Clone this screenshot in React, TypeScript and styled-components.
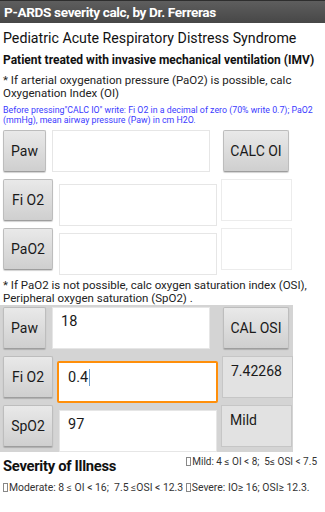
import styled, { createGlobalStyle } from "styled-components";

const Global = createGlobalStyle`
  html, body {
    margin: 0;
    padding: 0;
    background: #ffffff;
    font-family: Roboto, "Noto Sans", "Liberation Sans", sans-serif;
    color: #1c1c1c;
  }
  * { box-sizing: border-box; }
`;

const Screen = styled.div`
  width: 325px;
  height: 512px;
  overflow: hidden;
  background: #fff;
`;

const TitleBar = styled.div`
  height: 23px;
  background: linear-gradient(#5e5e5e, #474747);
  border-top: 1px solid #2e2e2e;
  color: #fff;
  font-weight: 700;
  font-size: 13.6px;
  letter-spacing: -0.35px;
  line-height: 22px;
  padding-left: 4px;
`;

const Heading = styled.div`
  font-size: 14.2px;
  line-height: 18px;
  padding: 6px 0 0 3px;
  color: #111;
`;

const SubHeading = styled.div`
  font-size: 12px;
  font-weight: 700;
  line-height: 16px;
  padding: 5px 0 0 3px;
  color: #111;
  white-space: nowrap;
`;

const Note = styled.div`
  font-size: 11.5px;
  line-height: 12.5px;
  padding: 6px 0 0 3px;
  color: #222;
`;

const Hint = styled.div`
  font-size: 8.8px;
  line-height: 10px;
  padding: 6px 0 0 3px;
  color: #3b3bff;
  white-space: nowrap;
`;

const Panel = styled.div<{ $gray?: boolean; $top: number }>`
  width: 293px;
  margin-top: ${(p) => p.$top}px;
  padding-top: 2px;
  background: ${(p) => (p.$gray ? "#d4d4d4" : "transparent")};
`;

const Row = styled.div<{ $h: number }>`
  display: flex;
  align-items: flex-start;
  height: ${(p) => p.$h}px;
`;

const Button = styled.div<{ $w: number; $ml: number }>`
  width: ${(p) => p.$w}px;
  height: 42px;
  margin-left: ${(p) => p.$ml}px;
  display: flex;
  align-items: center;
  justify-content: center;
  font-size: 14px;
  color: #1a1a1a;
  background: linear-gradient(#e9e9e9, #cfcfcf);
  border: 1px solid #bdbdbd;
  border-bottom-color: #9e9e9e;
  border-radius: 2px;
  box-shadow: 0 1px 1px rgba(0, 0, 0, 0.18);
  flex-shrink: 0;
`;

const Field = styled.div<{ $w: number; $ml: number; $mt?: number; $focus?: boolean }>`
  width: ${(p) => p.$w}px;
  height: 42px;
  margin-left: ${(p) => p.$ml}px;
  margin-top: ${(p) => p.$mt ?? 0}px;
  background: #fff;
  border: ${(p) => (p.$focus ? "2px solid #ff8f0a" : "1px solid #e6e6e6")};
  border-radius: ${(p) => (p.$focus ? "2px" : "0")};
  padding: ${(p) => (p.$focus ? "6px 0 0 9px" : "5px 0 0 8px")};
  font-size: 14.5px;
  line-height: 18px;
  color: #1a1a1a;
  flex-shrink: 0;
`;

const Caret = styled.span`
  display: inline-block;
  width: 1px;
  height: 17px;
  margin-left: 1px;
  vertical-align: -4px;
  background: #6a9fd0;
`;

const Result = styled.div<{ $gray?: boolean }>`
  width: 71px;
  height: 42px;
  margin-left: 4px;
  background: ${(p) => (p.$gray ? "#e2e2e2" : "#fff")};
  border: 1px solid ${(p) => (p.$gray ? "#c6c6c6" : "#ececec")};
  padding: 5px 0 0 8px;
  font-size: 14px;
  line-height: 18px;
  color: #1a1a1a;
  flex-shrink: 0;
`;

const Note2 = styled(Note)`
  padding-top: 4px;
`;

const Footer = styled.div`
  display: flex;
  align-items: flex-end;
  justify-content: space-between;
  padding: 4px 0 0 3px;
`;

const Severity = styled.div`
  font-size: 14.8px;
  font-weight: 700;
  letter-spacing: -0.3px;
  line-height: 20px;
  color: #111;
`;

const Legend = styled.div`
  font-size: 10px;
  line-height: 12px;
  color: #333;
  white-space: pre;
`;

const MildLegend = styled(Legend)`
  margin-right: 8px;
  align-self: flex-start;
`;

const LegendRow = styled(Legend)`
  font-size: 10.4px;
  padding: 6px 0 0 3px;
`;

const Tofu = styled.span`
  display: inline-block;
  width: 5px;
  height: 9px;
  border: 1px solid #888;
  margin-right: 1px;
  vertical-align: -1px;
`;

export default function App() {
  return (
    <Screen>
      <Global />
      <TitleBar>P-ARDS severity calc, by Dr. Ferreras</TitleBar>
      <Heading>Pediatric Acute Respiratory Distress Syndrome</Heading>
      <SubHeading>Patient treated with invasive mechanical ventilation (IMV)</SubHeading>
      <Note>
        * If arterial oxygenation pressure (PaO2) is possible, calc
        <br />
        Oxygenation Index (OI)
      </Note>
      <Hint>
        Before pressing"CALC IO" write: Fi O2 in a decimal of zero (70% write 0.7); PaO2
        <br />
        (mmHg), mean airway pressure (Paw) in cm H2O.
      </Hint>

      <Panel $top={3}>
        <Row $h={49}>
          <Button $w={43} $ml={3}>Paw</Button>
          <Field $w={158} $ml={6} />
          <Button $w={66} $ml={13}>CALC OI</Button>
        </Row>
        <Row $h={49}>
          <Button $w={50} $ml={3}>Fi O2</Button>
          <Field $w={158} $ml={6} $mt={5} />
          <Result />
        </Row>
        <Row $h={47}>
          <Button $w={50} $ml={3}>PaO2</Button>
          <Field $w={158} $ml={6} $mt={5} />
          <Result />
        </Row>
      </Panel>

      <Note2>
        * If PaO2 is not possible, calc oxygen saturation index (OSI),
        <br />
        Peripheral oxygen saturation (SpO2) .
      </Note2>

      <Panel $gray $top={1}>
        <Row $h={49}>
          <Button $w={43} $ml={3}>Paw</Button>
          <Field $w={158} $ml={6}>18</Field>
          <Button $w={66} $ml={13}>CAL OSI</Button>
        </Row>
        <Row $h={49}>
          <Button $w={50} $ml={3}>Fi O2</Button>
          <Field $w={161} $ml={4} $mt={5} $focus>
            0.4
            <Caret />
          </Field>
          <Result $gray>7.42268</Result>
        </Row>
        <Row $h={47}>
          <Button $w={50} $ml={3}>SpO2</Button>
          <Field $w={158} $ml={6} $mt={5}>97</Field>
          <Result $gray>Mild</Result>
        </Row>
      </Panel>

      <Footer>
        <Severity>Severity of Illness</Severity>
        <MildLegend>
          <Tofu />
          {"Mild: 4 ≤ OI < 8;  5≤ OSI < 7.5"}
        </MildLegend>
      </Footer>
      <LegendRow>
        <Tofu />
        {"Moderate: 8 ≤ OI < 16;  7.5 ≤OSI < 12.3 "}
        <Tofu />
        {"Severe: IO≥ 16; OSI≥ 12.3."}
      </LegendRow>
    </Screen>
  );
}
